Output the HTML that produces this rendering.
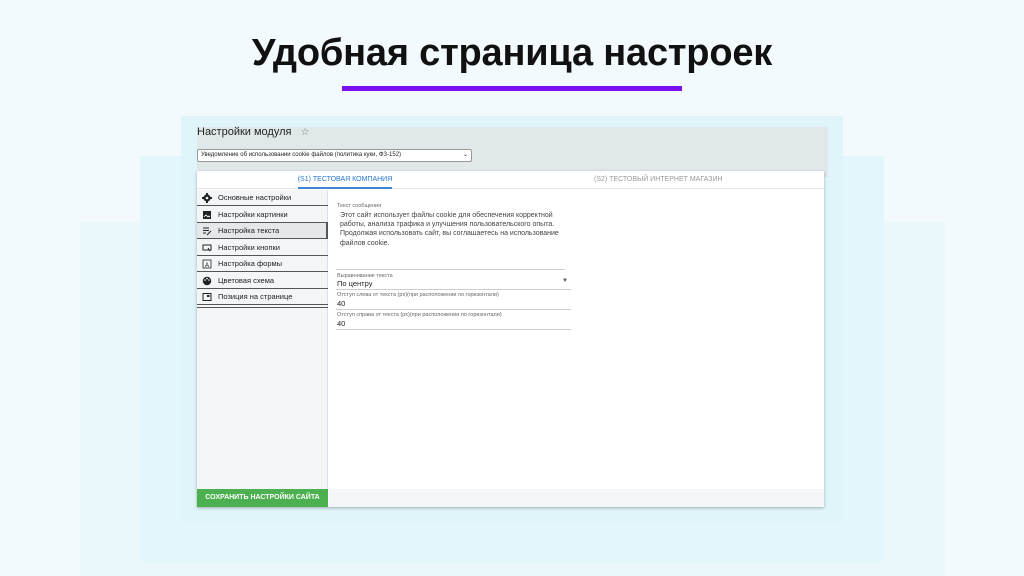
<!DOCTYPE html>
<html><head><meta charset="utf-8"><style>
*{margin:0;padding:0;box-sizing:border-box}
body{width:1024px;height:576px;background:#f2fafd;font-family:"Liberation Sans",sans-serif;position:relative;overflow:hidden;color:#222}
.abs{position:absolute;white-space:nowrap}
h1{position:absolute;left:0;width:1024px;top:32px;text-align:center;font-size:38px;font-weight:bold;color:#111;letter-spacing:-0.2px}
.bar{left:342px;top:86px;width:340px;height:5px;background:#7b10f5}
.l1{left:80px;top:222px;width:865px;height:354px;background:#eaf7fb}
.l2{left:140px;top:156px;width:744px;height:406px;background:#e3f6fb}
.l3{left:181px;top:116px;width:662px;height:406px;background:#e0f5fa}
.hdr{left:197px;top:127px;width:631px;height:50px;background:#e1e8ea}
.card{left:197px;top:171px;width:627px;height:336px;background:#fff;box-shadow:0 1px 3px rgba(0,0,0,.3)}
.side{left:197px;top:190px;width:131px;height:317px;background:#f3f6f7;border-right:1px solid #dde}
.item{position:absolute;left:0;width:131px;height:16px;border-bottom:1px solid #555;font-size:7.5px;line-height:15px;padding-left:21px;color:#222}
.item svg{position:absolute;left:5px;top:3px}
.sel{background:#e4e8ea;border-right:2px solid #555}
.lbl{font-size:5.5px;color:#666}
.val{font-size:7.5px;color:#222}
.line{height:1px;background:#ccc;width:235px}
</style></head><body>
<h1>Удобная страница настроек</h1>
<div class="abs bar"></div>
<div class="abs l1"></div>
<div class="abs l2"></div>
<div class="abs l3"></div>
<div class="abs hdr"></div>
<div class="abs" style="left:197px;top:126px;font-size:11px;color:#222">Настройки модуля <span style="color:#777;font-size:10px;margin-left:6px">☆</span></div>
<div class="abs" style="left:197px;top:149px;width:275px;height:13px;background:#fff;border:1px solid #999;border-radius:2px;font-size:6px;line-height:11px;padding-left:3px">Уведомление об использовании cookie файлов (политика куки, ФЗ-152)<span style="position:absolute;right:3px;font-size:6px">⌄</span></div>
<div class="abs card"></div>
<div class="abs" style="left:197px;top:171px;width:627px;height:18px;border-bottom:1px solid #e4e4e4"></div>
<div class="abs" style="left:288px;top:176px;font-size:7px;color:#2979d0;width:114px;text-align:center">(S1) ТЕСТОВАЯ КОМПАНИЯ</div>
<div class="abs" style="left:298px;top:187px;width:94px;height:2px;background:#3f86d4"></div>
<div class="abs" style="left:594px;top:176px;font-size:7px;color:#999">(S2) ТЕСТОВЫЙ ИНТЕРНЕТ МАГАЗИН</div>
<div class="abs side">
<div class="item" style="top:0"><svg width="10" height="10" viewBox="0 0 10 10"><circle cx="5" cy="5" r="3.6" fill="#222"/><circle cx="5" cy="5" r="1.3" fill="#f3f6f7"/><path d="M4 0h2v2H4zM4 8h2v2H4zM0 4h2v2H0zM8 4h2v2H8z" fill="#222"/></svg>Основные настройки</div>
<div class="item" style="top:16.5px"><svg width="10" height="10"><rect x="1" y="1" width="8" height="8" fill="#222"/><path d="M2 7l2-2 2 2 1-1 1 1" stroke="#fff" stroke-width=".8" fill="none"/></svg>Настройки картинки</div>
<div class="item sel" style="top:33px"><svg width="10" height="10"><path d="M1 2h6M1 4.5h6M1 7h3M5 9l4-4" stroke="#222" stroke-width="1"/></svg>Настройка текста</div>
<div class="item" style="top:49.5px"><svg width="10" height="10"><rect x="1" y="2" width="8" height="5" fill="none" stroke="#222"/><path d="M6 5l2 3" stroke="#222"/></svg>Настройки кнопки</div>
<div class="item" style="top:66px"><svg width="10" height="10"><rect x="1" y="1" width="8" height="8" fill="none" stroke="#222" stroke-width=".8"/><text x="3" y="8" font-size="6" font-family="Liberation Sans">A</text></svg>Настройка формы</div>
<div class="item" style="top:82.5px"><svg width="10" height="10"><circle cx="5" cy="5" r="4.2" fill="#222"/><circle cx="3" cy="4" r=".8" fill="#fff"/><circle cx="5" cy="2.6" r=".8" fill="#fff"/><circle cx="7" cy="4" r=".8" fill="#fff"/></svg>Цветовая схема</div>
<div class="item" style="top:99px"><svg width="10" height="10"><rect x="1" y="1.5" width="8" height="7" fill="none" stroke="#222"/><rect x="5" y="3" width="2.5" height="2" fill="#222"/></svg>Позиция на странице</div>
<div class="item" style="top:115.5px;height:2px"></div>
</div>
<div class="abs" style="left:329px;top:489px;width:495px;height:18px;background:#f3f6f7"></div>
<div class="abs" style="left:197px;top:489px;width:131px;height:18px;background:#4caf50;color:#fff;font-size:7px;font-weight:bold;line-height:18px;text-align:center">СОХРАНИТЬ НАСТРОЙКИ САЙТА</div>
<div class="abs lbl" style="left:337px;top:203px">Текст сообщения</div>
<div class="abs" style="left:340px;top:211px;font-size:7px;line-height:9.2px;color:#444;width:240px;white-space:normal">Этот сайт использует файлы cookie для обеспечения корректной работы, анализа трафика и улучшения пользовательского опыта. Продолжая использовать сайт, вы соглашаетесь на использование файлов cookie.</div>
<div class="abs line" style="left:336px;top:269px;width:229px"></div>
<div class="abs lbl" style="left:337px;top:273px">Выравнивание текста</div>
<div class="abs val" style="left:337px;top:279px">По центру</div>
<div class="abs" style="left:562px;top:278px;font-size:6px;color:#555">▼</div>
<div class="abs line" style="left:336px;top:289px"></div>
<div class="abs lbl" style="left:337px;top:292px">Отступ слева от текста (px)(при расположении по горизонтали)</div>
<div class="abs val" style="left:337px;top:299px">40</div>
<div class="abs line" style="left:336px;top:309px"></div>
<div class="abs lbl" style="left:337px;top:312px">Отступ справа от текста (px)(при расположении по горизонтали)</div>
<div class="abs val" style="left:337px;top:319px">40</div>
<div class="abs line" style="left:336px;top:329px"></div>
</body></html>
